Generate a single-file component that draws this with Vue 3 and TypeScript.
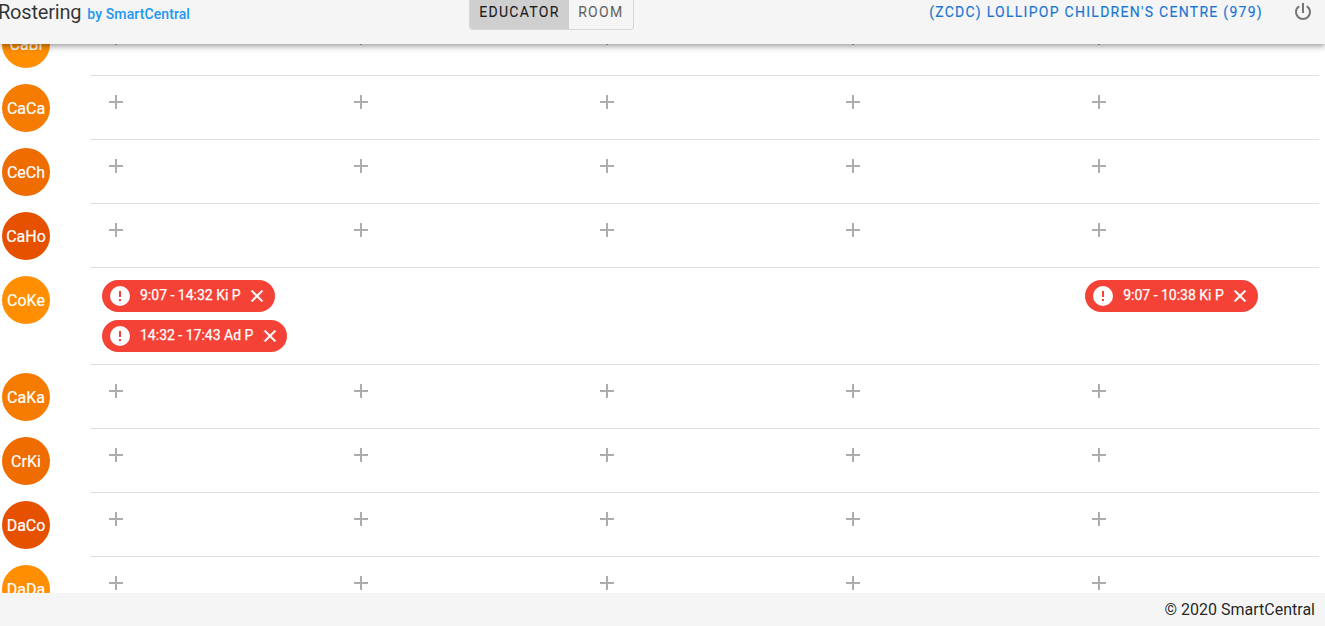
<script setup lang="ts">
interface Chip { text: string }
interface Row { initials: string; color: string; cells: Chip[][] }

const empty = (): Chip[][] => [[], [], [], [], []]
const plain = (initials: string, color: string): Row => ({ initials, color, cells: empty() })

const rows: Row[] = [
  plain('CaBi', '#ff8f00'),
  plain('CaCa', '#f57c00'),
  plain('CeCh', '#ef6c00'),
  plain('CaHo', '#e65100'),
  {
    initials: 'CoKe',
    color: '#ff8f00',
    cells: [
      [{ text: '9:07 - 14:32 Ki P' }, { text: '14:32 - 17:43 Ad P' }],
      [],
      [],
      [],
      [{ text: '9:07 - 10:38 Ki P' }],
    ],
  },
  plain('CaKa', '#f57c00'),
  plain('CrKi', '#ef6c00'),
  plain('DaCo', '#e65100'),
  plain('DaDa', '#ff8f00'),
]

const hasChips = (row: Row) => row.cells.some((c) => c.length > 0)
</script>

<template>
  <div class="app">
    <header class="bar">
      <div class="brand">
        <span class="title">Rostering</span>
        <span class="by">by SmartCentral</span>
      </div>
      <div class="toggle">
        <span class="tab tab-on">EDUCATOR</span>
        <span class="tab">ROOM</span>
      </div>
      <span class="centre">(ZCDC) LOLLIPOP CHILDREN'S CENTRE (979)</span>
      <svg class="power" viewBox="0 0 24 24" width="24" height="24">
        <path d="M16.56,5.44L15.11,6.89C16.84,7.94 18,9.83 18,12A6,6 0 0,1 12,18A6,6 0 0,1 6,12C6,9.83 7.16,7.94 8.88,6.88L7.44,5.44C5.36,6.88 4,9.28 4,12A8,8 0 0,0 12,20A8,8 0 0,0 20,12C20,9.28 18.64,6.88 16.56,5.44M13,3H11V13H13" />
      </svg>
    </header>

    <main class="scroll">
      <div class="list">
        <div v-for="row in rows" :key="row.initials" class="row">
          <div class="avatar" :style="{ background: row.color }">{{ row.initials }}</div>
          <div class="cells">
            <div v-for="(cell, i) in row.cells" :key="i" class="cell">
              <template v-if="hasChips(row)">
                <div v-for="chip in cell" :key="chip.text" class="chip">
                  <svg class="chip-alert" viewBox="0 0 24 24" width="24" height="24">
                    <path d="M13,13H11V7H13M13,17H11V15H13M12,2A10,10 0 0,0 2,12A10,10 0 0,0 12,22A10,10 0 0,0 22,12A10,10 0 0,0 12,2Z" />
                  </svg>
                  <span class="chip-text">{{ chip.text }}</span>
                  <svg class="chip-close" viewBox="0 0 24 24" width="20" height="20">
                    <path d="M19,6.41L17.59,5L12,10.59L6.41,5L5,6.41L10.59,12L5,17.59L6.41,19L12,13.41L17.59,19L19,17.59L13.41,12L19,6.41Z" />
                  </svg>
                </div>
              </template>
              <svg v-else class="plus" viewBox="0 0 24 24" width="24" height="24">
                <path d="M19,13H13V19H11V13H5V11H11V5H13V11H19V13Z" />
              </svg>
            </div>
          </div>
        </div>
      </div>
    </main>

    <footer class="foot">© 2020 SmartCentral</footer>
  </div>
</template>

<style>
html,
body {
  margin: 0;
  overflow: hidden;
}
</style>

<style scoped>
.app {
  position: relative;
  display: flex;
  flex-direction: column;
  width: 1325px;
  height: 626px;
  font-family: Roboto, "Liberation Sans", sans-serif;
  background: #fff;
  overflow: hidden;
}

.bar {
  position: absolute;
  top: 0;
  left: 0;
  right: 0;
  z-index: 2;
  height: 44px;
  box-sizing: border-box;
  display: flex;
  align-items: flex-start;
  background: #f5f5f5;
  box-shadow: 0 2px 4px -1px rgba(0, 0, 0, 0.2), 0 4px 5px 0 rgba(0, 0, 0, 0.14), 0 1px 10px 0 rgba(0, 0, 0, 0.12);
}

.brand {
  width: 469px;
  margin-left: -2px;
  flex: none;
  display: flex;
  align-items: baseline;
  gap: 6px;
  line-height: 24px;
}

.title {
  font-size: 20px;
  font-weight: 400;
  letter-spacing: -0.2px;
  color: rgba(0, 0, 0, 0.8);
}

.by {
  font-size: 14px;
  font-weight: 500;
  letter-spacing: 0.1px;
  color: #2196f3;
}

.toggle {
  flex: none;
  display: flex;
  height: 30px;
  box-sizing: border-box;
  border: 1px solid rgba(0, 0, 0, 0.12);
  border-top: none;
  border-radius: 0 0 4px 4px;
  overflow: hidden;
  margin-left: 2px;
}

.tab {
  padding: 0 9.25px;
  height: 24px;
  font-size: 14px;
  font-weight: 400;
  letter-spacing: 1.3px;
  line-height: 25px;
  -webkit-text-stroke: 0.15px currentColor;
  color: rgba(0, 0, 0, 0.6);
}

.tab-on {
  height: 29px;
  color: rgba(0, 0, 0, 0.87);
  background: #cfcfcf;
}

.centre {
  margin-left: auto;
  font-size: 14px;
  font-weight: 400;
  letter-spacing: 1.28px;
  line-height: 25px;
  -webkit-text-stroke: 0.15px currentColor;
  color: #1976d2;
}

.power {
  flex: none;
  margin: 0 10px 0 28px;
  fill: #757575;
}

.scroll {
  flex: 1;
  min-height: 0;
  overflow: hidden;
}

.list {
  padding-top: 12px;
}

.row {
  display: flex;
  align-items: flex-start;
  padding: 0 6px 0 2px;
}

.avatar {
  flex: none;
  width: 48px;
  height: 48px;
  margin: 8px 40px 0 0;
  border-radius: 50%;
  display: flex;
  align-items: center;
  justify-content: center;
  font-size: 16px;
  -webkit-text-stroke: 0.2px #fff;
  color: #fff;
}

.cells {
  flex: 1;
  min-width: 0;
  min-height: 63px;
  display: grid;
  grid-template-columns: repeat(5, 1fr);
  border-bottom: 1px solid #e0e0e0;
}

.cell {
  display: flex;
  flex-direction: column;
  align-items: flex-start;
  gap: 8px;
  padding: 12px 0 12px 12px;
}

.plus {
  margin: 2px 0 0 1.5px;
  fill: rgba(0, 0, 0, 0.32);
}

.chip {
  display: flex;
  align-items: center;
  height: 32px;
  padding: 0 7.5px 0 6px;
  border-radius: 16px;
  background: #f44336;
  color: #fff;
}

.chip-alert {
  fill: #fff;
  margin-right: 8px;
}

.chip-text {
  font-size: 14px;
  font-weight: 400;
  line-height: 30px;
  margin-bottom: 2px;
  -webkit-text-stroke: 0.25px #fff;
  white-space: nowrap;
}

.chip-close {
  fill: #fff;
  stroke: #fff;
  stroke-width: 0.7;
  margin-left: 6.5px;
}

.foot {
  flex: none;
  height: 33px;
  box-sizing: border-box;
  padding: 7px 10px 0 0;
  text-align: right;
  font-size: 16px;
  line-height: 20px;
  color: rgba(0, 0, 0, 0.87);
  background: #f5f5f5;
}
</style>
